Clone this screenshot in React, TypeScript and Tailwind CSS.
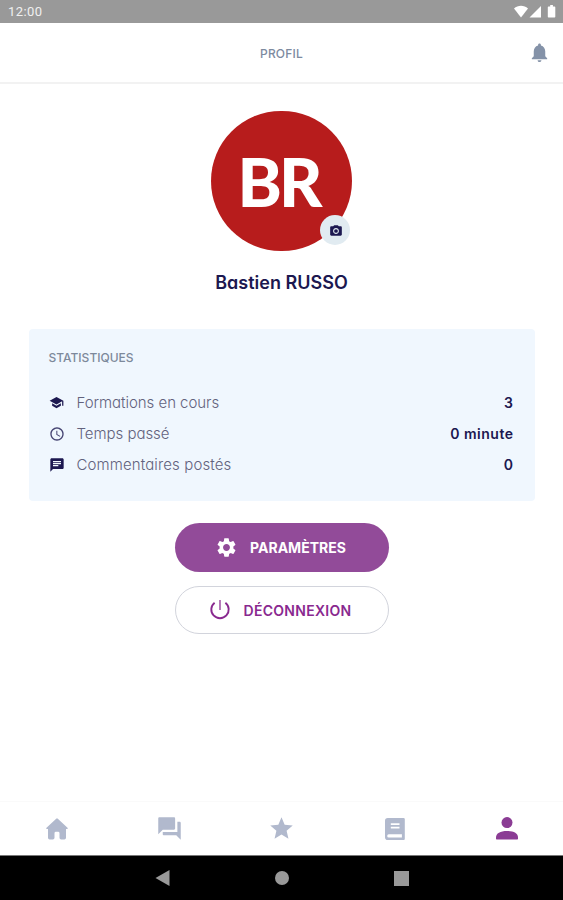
import type { ReactNode } from 'react'
import {
  MdAccessTime,
  MdChat,
  MdNotifications,
  MdPhotoCamera,
  MdQuestionAnswer,
  MdSchool,
  MdSettings,
  MdStar,
} from 'react-icons/md'

const stats = [
  { icon: <MdSchool size={15} />, label: 'Formations en cours', value: '3', spacing: 'tracking-[-0.04px]' },
  { icon: <MdAccessTime size={16} className="opacity-80" />, label: 'Temps passé', value: '0 minute', spacing: 'tracking-[-0.04px]' },
  { icon: <MdChat size={16} />, label: 'Commentaires postés', value: '0', spacing: 'tracking-[0.12px]' },
]

function HomeIcon() {
  return (
    <svg width="24" height="24" viewBox="0 0 24 24" fill="currentColor">
      <path d="M11.2 1.7a1.2 1.2 0 0 1 1.6 0l9.7 9.1c.6.6.4 1.2-.4 1.2H21v8.8a1.7 1.7 0 0 1-1.7 1.7h-3.1a1.7 1.7 0 0 1-1.7-1.7v-4.6a1.4 1.4 0 0 0-1.4-1.4h-2.2a1.4 1.4 0 0 0-1.4 1.4v4.6a1.7 1.7 0 0 1-1.7 1.7H4.7A1.7 1.7 0 0 1 3 20.8V12H1.9c-.8 0-1-.6-.4-1.2z" />
    </svg>
  )
}

function BookIcon() {
  return (
    <svg width="20" height="22" viewBox="0 0 20 22" fill="currentColor">
      <path
        fillRule="evenodd"
        d="M2.8 0h15.7A1.3 1.3 0 0 1 19.8 1.3v19.4c0 .8-.5 1.3-1.3 1.3H2.8A2.8 2.8 0 0 1 0 19.2V2.8A2.8 2.8 0 0 1 2.8 0zM5.8 5.200v1.700h8.700V5.200zM5.800 8.700v1.700h8.700V8.700zM3.800 16.300a1.600 1.600 0 0 0 0 3.200h13.100v-3.200z"
      />
    </svg>
  )
}

function PersonIcon() {
  return (
    <svg width="22" height="23" viewBox="0 0 22 23" fill="currentColor">
      <circle cx="11" cy="5.6" r="5.5" />
      <path d="M0 20.5C0 16.3 4.3 14 11 14s11 2.3 11 6.5v1c0 .6-.4 1-1 1H1c-.6 0-1-.4-1-1z" />
    </svg>
  )
}

function PowerIcon() {
  return (
    <svg width="20" height="20" viewBox="0 0 20 20" fill="none" stroke="currentColor" strokeWidth="1.9">
      <path d="M4.6 2.7A8.7 8.7 0 1 0 15.4 2.7" />
      <path d="M10 0v10" strokeOpacity=".65" />
    </svg>
  )
}

function StatusBar() {
  return (
    <div className="flex h-[23px] items-center justify-between bg-[#999999] pl-2 pr-[6px] text-white">
      <span className="font-[Roboto] text-[13px] leading-none tracking-[0.4px] text-[#f0f0f0]">12:00</span>
      <svg width="44" height="14" viewBox="0 0 44 14" fill="currentColor">
        <path d="M1 3.5C4.8-.2 11.2-.2 15 3.5L8 12.5z" />
        <path d="M28 1v11.500H16.500z" />
        <path d="M35.500 1.500h1.700V0h2.700v1.500h1.700c.4 0 .7.300.7.700v9.600c0 .4-.3.700-.7.700h-6.100a.7.700 0 0 1-.7-.7V2.200c0-.4.300-.7.700-.7z" />
      </svg>
    </div>
  )
}

function NavItem({ children, active = false }: { children: ReactNode; active?: boolean }) {
  return (
    <button className={`flex flex-1 items-center justify-center pl-px ${active ? 'text-[#8b3c94]' : 'text-[#b1b9cd]'}`}>
      {children}
    </button>
  )
}

export default function App() {
  return (
    <div className="flex h-[900px] w-full flex-col bg-white font-[Inter,sans-serif] text-[#1c1850] [font-feature-settings:'cv11']">
      <StatusBar />

      {/* Header */}
      <header className="grid h-[61px] grid-cols-3 items-center border-b-2 border-[#f2f2f2] px-[12px]">
        <span />
        <h1 className="pt-[2px] text-center text-[12px] font-medium tracking-[0.2px] text-[#7d8a9f]">PROFIL</h1>
        <MdNotifications size={23} className="justify-self-end text-[#8492a8]" />
      </header>

      <main className="flex flex-1 flex-col items-center">
        {/* Avatar */}
        <div className="relative mt-[27px] flex h-[140px] w-[141px] items-center justify-center rounded-full bg-[#b71c1c]">
          <span className="pr-[6px] font-[Lato] text-[67px] font-black leading-none tracking-[-3px] text-white">BR</span>
          <button className="absolute bottom-[6px] right-[2px] flex h-[30px] w-[30px] items-center justify-center rounded-full bg-[#e1ebf1] pl-px pt-px">
            <MdPhotoCamera size={14} />
          </button>
        </div>
        <h2 className="mt-[18px] text-[18px] font-semibold leading-[28px]">Bastien RUSSO</h2>

        {/* Statistics */}
        <section className="mt-[32px] h-[172px] w-[506px] rounded-[4px] bg-[#f0f7fe] px-5 pt-5">
          <h3 className="text-[12px] font-medium leading-[18px] text-[#7d899b]">STATISTIQUES</h3>
          <ul className="mt-[20px]">
            {stats.map(stat => (
              <li key={stat.label} className="flex h-[31px] items-center">
                <span className="flex w-7 shrink-0">{stat.icon}</span>
                <span className={`pt-px text-[15px] font-light text-[#62627d] ${stat.spacing}`}>{stat.label}</span>
                <span className="ml-auto mr-px text-[14px] font-semibold tracking-[0.5px]">{stat.value}</span>
              </li>
            ))}
          </ul>
        </section>

        <button className="mt-[22px] flex h-[49px] w-[214px] items-center justify-center gap-3 rounded-full bg-[#924b99] pr-[2px] text-white">
          <MdSettings size={23} />
          <span className="text-[14px] font-bold">PARAMÈTRES</span>
        </button>
        <button className="mt-[14px] flex h-[48px] w-[214px] items-center justify-center gap-[13px] rounded-full border border-[#d2d4dc] pr-px text-[#89298f]">
          <PowerIcon />
          <span className="text-[14px] font-semibold tracking-[0.3px]">DÉCONNEXION</span>
        </button>
      </main>

      {/* Tab bar */}
      <nav className="flex h-[54px] border-t border-[#fafafa]">
        <NavItem><HomeIcon /></NavItem>
        <NavItem><MdQuestionAnswer size={27} /></NavItem>
        <NavItem><MdStar size={27} /></NavItem>
        <NavItem><BookIcon /></NavItem>
        <NavItem active><PersonIcon /></NavItem>
      </nav>

      {/* System buttons */}
      <div className="flex h-[45px] items-center justify-center gap-[105px] border-t border-[#777777] bg-black text-[#999999]">
        <svg width="15" height="16" viewBox="0 0 14 16" fill="currentColor"><path d="M14 0v16L0 8z" /></svg>
        <span className="h-[14px] w-[14px] rounded-full bg-[#999999]" />
        <span className="h-[15px] w-[15px] bg-[#999999]" />
      </div>
    </div>
  )
}
